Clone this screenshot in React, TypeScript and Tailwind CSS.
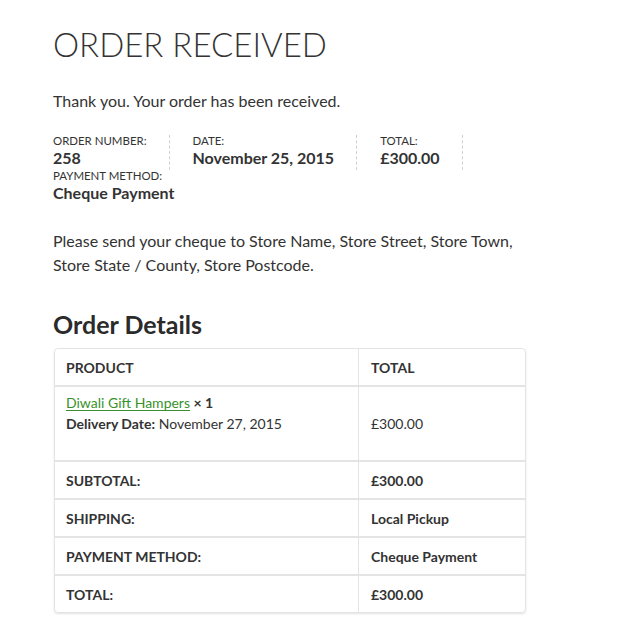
import React from "react";

const details = [
  { label: "Order Number:", value: "258" },
  { label: "Date:", value: "November 25, 2015" },
  { label: "Total:", value: "£300.00" },
  { label: "Payment Method:", value: "Cheque Payment" },
];

const totals = [
  { label: "Subtotal:", value: "£300.00" },
  { label: "Shipping:", value: "Local Pickup" },
  { label: "Payment Method:", value: "Cheque Payment" },
  { label: "Total:", value: "£300.00" },
];

const App: React.FC = () => {
  return (
    <div className="min-h-[639px] bg-white font-['Lato','Noto_Sans',sans-serif] text-[#333333] px-[54px] pt-[25px]">
      <h1 className="text-[33px] font-light leading-[1.2] uppercase -ml-px">Order Received</h1>

      <p className="mt-[24px] text-[16px] leading-[24px] -ml-px">Thank you. Your order has been received.</p>

      {/* résumé de la commande */}
      <ul className="mt-[22px] flex flex-wrap w-[472px] -ml-px">
        {details.map((d, i) => (
          <li
            key={d.label}
            className={
              i < details.length - 1
                ? "pr-[22px] mr-[23px] border-r border-dashed border-[#d3ced2] text-[11.44px] leading-none uppercase"
                : "text-[11.44px] leading-none uppercase"
            }
          >
            {d.label}
            <strong className="block text-[16px] font-bold leading-[1.5] normal-case">{d.value}</strong>
          </li>
        ))}
      </ul>

      <p className="mt-[24px] text-[16px] leading-[24px] w-[472px] -ml-px">
        Please send your cheque to Store Name, Store Street, Store Town, Store State / County, Store Postcode.
      </p>

      <h2 className="mt-[32px] text-[25px] font-bold leading-[1.2] text-[#2b2b2b] -ml-px">Order Details</h2>

      <div className="mt-[9px] w-[472px] border border-[#e4e4e4] rounded-[4px] shadow-[0_1px_2px_rgba(0,0,0,0.12)] text-[14px]">
        <div className="flex h-[36px] font-bold uppercase">
          <div className="w-[304px] border-r border-[#e4e4e4] pl-[11px] flex items-center">Product</div>
          <div className="flex-1 pl-[12px] flex items-center">Total</div>
        </div>

        <div className="flex border-t-2 border-[#e4e4e4]">
          <div className="w-[304px] border-r border-[#e4e4e4] pl-[11px] pt-[5px] pb-[26px] leading-[21px]">
            <div>
              <a href="#" className="text-[#37922b] underline underline-offset-2">Diwali Gift Hampers</a>{" "}
              <strong className="font-bold">× 1</strong>
            </div>
            <div>
              <strong className="font-bold">Delivery Date:</strong> November 27, 2015
            </div>
          </div>
          <div className="flex-1 pl-[12px] flex items-center">£300.00</div>
        </div>

        {totals.map((t) => (
          <div key={t.label} className="flex h-[38px] border-t-2 border-[#e4e4e4] font-bold">
            <div className="w-[304px] border-r border-[#e4e4e4] pl-[11px] flex items-center uppercase">{t.label}</div>
            <div className="flex-1 pl-[12px] flex items-center">{t.value}</div>
          </div>
        ))}
      </div>
    </div>
  );
};

export default App;
